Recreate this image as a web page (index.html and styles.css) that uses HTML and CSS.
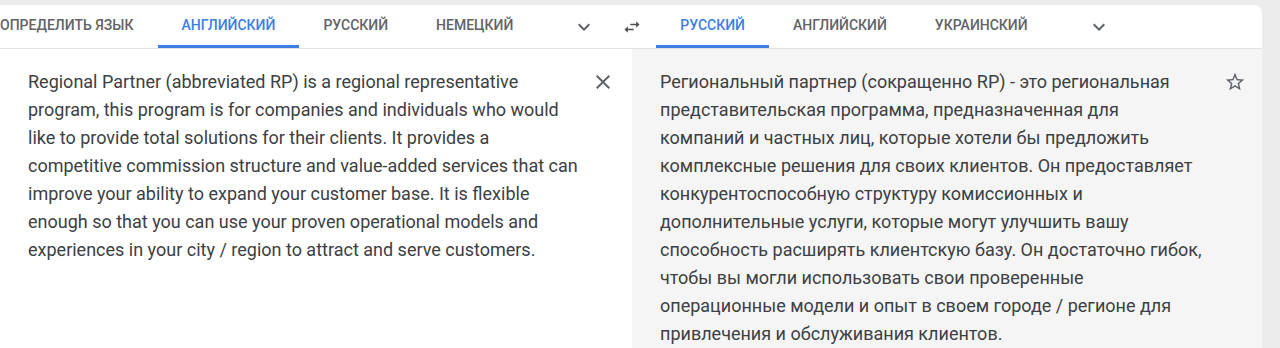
FILE: index.html
```html
<!DOCTYPE html>
<html lang="ru">
<head>
    <meta charset="UTF-8">
    <meta name="viewport" content="width=device-width, initial-scale=1.0">
    <title>Переводчик</title>
    <link rel="stylesheet" href="styles.css">
</head>
<body>

<div class="translator">
    <div class="lang-bar">
        <div class="lang-side">
            <button class="tab first">Определить язык</button>
            <button class="tab active">Английский</button>
            <button class="tab">Русский</button>
            <button class="tab">Немецкий</button>
            <button class="icon-btn more">
                <svg viewBox="0 0 24 24" width="24" height="24"><path d="M16.59 8.59L12 13.17 7.41 8.59 6 10l6 6 6-6z"/></svg>
            </button>
        </div>
        <button class="icon-btn swap">
            <svg viewBox="0 0 24 24" width="20" height="20"><path d="M6.99 11L3 15l3.99 4v-3H14v-2H6.99v-3zM21 9l-4-4v3h-7v2h7v3l4-4z"/></svg>
        </button>
        <div class="lang-side">
            <button class="tab active">Русский</button>
            <button class="tab">Английский</button>
            <button class="tab">Украинский</button>
            <button class="icon-btn more">
                <svg viewBox="0 0 24 24" width="24" height="24"><path d="M16.59 8.59L12 13.17 7.41 8.59 6 10l6 6 6-6z"/></svg>
            </button>
        </div>
    </div>

    <div class="panels">
        <div class="panel source">
            <p class="text">Regional Partner (abbreviated RP) is a regional representative<br>
program, this program is for companies and individuals who would<br>
like to provide total solutions for their clients. It provides a<br>
competitive commission structure and value-added services that can<br>
improve your ability to expand your customer base. It is flexible<br>
enough so that you can use your proven operational models and<br>
experiences in your city / region to attract and serve customers.</p>
            <button class="icon-btn clear">
                <svg viewBox="0 0 24 24" width="24" height="24"><path d="M19 6.41L17.59 5 12 10.59 6.41 5 5 6.41 10.59 12 5 17.59 6.41 19 12 13.41 17.59 19 19 17.59 13.41 12z"/></svg>
            </button>
        </div>
        <div class="panel target">
            <p class="text">Региональный партнер (сокращенно RP) - это региональная<br>
представительская программа, предназначенная для<br>
компаний и частных лиц, которые хотели бы предложить<br>
комплексные решения для своих клиентов. Он предоставляет<br>
конкурентоспособную структуру комиссионных и<br>
дополнительные услуги, которые могут улучшить вашу<br>
способность расширять клиентскую базу. Он достаточно гибок,<br>
чтобы вы могли использовать свои проверенные<br>
операционные модели и опыт в своем городе / регионе для<br>
привлечения и обслуживания клиентов.</p>
            <button class="icon-btn star">
                <svg viewBox="0 0 24 24" width="22" height="22"><path d="M22 9.24l-7.19-.62L12 2 9.19 8.63 2 9.24l5.46 4.73L5.82 21 12 17.27 18.18 21l-1.63-7.03L22 9.24zM12 15.4l-3.76 2.27 1-4.28-3.32-2.88 4.38-.38L12 6.1l1.71 4.04 4.38.38-3.32 2.88 1 4.28L12 15.4z"/></svg>
            </button>
        </div>
    </div>
</div>

</body>
</html>
```

FILE: styles.css
```css
body {
    margin: 0;
    padding-top: 5px;
    background-color: #ececec;
    font-family: Roboto, "Liberation Sans", Arial, sans-serif;
    overflow: hidden;
}
.translator {
    width: 1262px;
    background-color: #ffffff;
    border-radius: 0 8px 0 0;
    overflow: hidden;
}
.lang-bar {
    display: flex;
    align-items: stretch;
    height: 43px;
    border-bottom: 1px solid #e3e3e3;
}
.lang-side {
    display: flex;
    align-items: stretch;
}
.tab {
    background: none;
    border: none;
    border-bottom: 3px solid transparent;
    padding: 0 24px;
    font-family: Roboto, "Liberation Sans", Arial, sans-serif;
    font-size: 14px;
    font-weight: 500;
    text-transform: uppercase;
    color: #5f6368;
    cursor: pointer;
}
.tab.first {
    padding-left: 0;
}
.tab.active {
    color: #3c7de4;
    border-bottom-color: #3f7fe3;
}
.icon-btn {
    background: none;
    border: none;
    padding: 0;
    width: 48px;
    display: flex;
    align-items: center;
    justify-content: center;
    cursor: pointer;
}
.icon-btn svg {
    fill: #5f6368;
}
.more {
    margin-left: 23px;
}
.swap svg {
    fill: #4d4f52;
}
.panels {
    display: flex;
    height: 299px;
}
.panel {
    display: flex;
    align-items: flex-start;
    padding: 19px 0 0 28px;
}
.panel.source {
    width: 632px;
    box-sizing: border-box;
    padding-right: 17px;
    background-color: #ffffff;
}
.panel.target {
    flex: 1;
    padding-right: 15px;
    background-color: #f5f5f5;
}
.text {
    flex: 1;
    margin: 0;
    font-size: 18px;
    line-height: 28px;
    color: #3c4043;
    white-space: nowrap;
}
.clear,
.star {
    width: 24px;
    height: 24px;
    margin-top: 2px;
}
```
